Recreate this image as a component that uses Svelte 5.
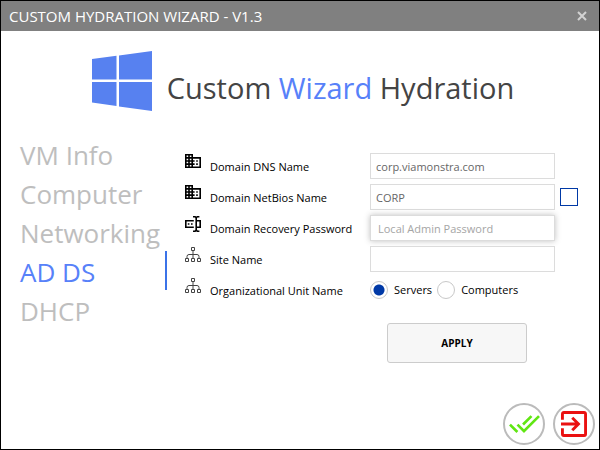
<script>
  const steps = ['VM Info', 'Computer', 'Networking', 'AD DS', 'DHCP'];
  let current = $state('AD DS');
  let dns = $state('corp.viamonstra.com');
  let netbios = $state('CORP');
  let password = $state('');
  let site = $state('');
  let unit = $state('servers');
  let custom = $state(false);
</script>

{#snippet building()}
  <svg class="icon" viewBox="2 3 20 18" width="16" height="14" preserveAspectRatio="none" aria-hidden="true">
    <path d="M18,15H16V17H18M18,11H16V13H18M20,19H12V17H14V15H12V13H14V11H12V9H20M10,7H8V5H10M10,11H8V9H10M10,15H8V13H10M10,19H8V17H10M6,7H4V5H6M6,11H4V9H6M6,15H4V13H6M6,19H4V17H6M12,7V3H2V21H22V7H12Z" />
  </svg>
{/snippet}

{#snippet tree()}
  <svg class="icon tree" viewBox="0 0 16 15" width="16" height="15" aria-hidden="true">
    <path d="M6.5 .5h3v3h-3zM.5 11.5h3v3h-3zM6.5 11.5h3v3h-3zM12.5 11.5h3v3h-3zM8 3.500v8M2 11.500v-2q0-2 2-2h8q2 0 2 2v2" />
  </svg>
{/snippet}

<div class="window">
  <header class="titlebar">
    <span>CUSTOM HYDRATION WIZARD - V1.3</span>
    <button class="close" aria-label="Close">
      <svg viewBox="0 0 10 10" width="10" height="10"><path d="M1 1l8 8M9 1l-8 8" /></svg>
    </button>
  </header>

  <div class="brand">
    <svg viewBox="0 0 60 60" width="60" height="60" aria-hidden="true">
      <path d="M0 8L24.500 4.700V28.500H0zM27 4.400L60 0V28.500H27zM0 31H24.500V55L0 51.500zM27 31H60V60L27 55.400z" />
    </svg>
    <h1>Custom <em>Wizard</em> Hydration</h1>
  </div>

  <main>
    <nav>
      {#each steps as step}
        <button class:active={step === current} onclick={() => (current = step)}>{step}</button>
      {/each}
    </nav>

    <form onsubmit={(e) => e.preventDefault()}>
      <div class="row">
        {@render building()}
        <label for="dns">Domain DNS Name</label>
        <input class="text" id="dns" type="text" bind:value={dns} />
      </div>
      <div class="row">
        {@render building()}
        <label for="netbios">Domain NetBios Name</label>
        <input class="text" id="netbios" type="text" bind:value={netbios} />
        <input class="check" type="checkbox" aria-label="Edit NetBios name" bind:checked={custom} />
      </div>
      <div class="row">
        <svg class="icon" viewBox="2 2 20 20" width="16" height="16" aria-hidden="true">
          <path d="M17,7H22V17H17V19A1,1 0 0,0 18,20H20V22H17.5C16.95,22 16,21.55 16,21C16,21.55 15.05,22 14.5,22H12V20H14A1,1 0 0,0 15,19V5A1,1 0 0,0 14,4H12V2H14.5C15.05,2 16,2.45 16,3C16,2.45 16.95,2 17.5,2H20V4H18A1,1 0 0,0 17,5V7M2,7H13V9H4V15H13V17H2V7M20,15V9H17V15H20M5.500,11H7.500V13H5.500zM9.500,11H11.500V13H9.500z" />
        </svg>
        <label for="password">Domain Recovery Password</label>
        <input class="text raised" id="password" type="password" placeholder="Local Admin Password" bind:value={password} />
      </div>
      <div class="row">
        {@render tree()}
        <label for="site">Site Name</label>
        <input class="text" id="site" type="text" bind:value={site} />
      </div>
      <div class="row" role="radiogroup" aria-labelledby="ou">
        {@render tree()}
        <span class="label" id="ou">Organizational Unit Name</span>
        <div class="options">
          <label><input type="radio" name="unit" value="servers" bind:group={unit} />Servers</label>
          <label><input type="radio" name="unit" value="computers" bind:group={unit} />Computers</label>
        </div>
      </div>
      <button class="apply" type="submit">APPLY</button>
    </form>
  </main>

  <footer>
    <button class="round ok" aria-label="Finish">
      <svg viewBox="0.400 5.500 23.300 13.500" width="31" height="18"><path d="M0.41,13.41L6,19L7.41,17.58L1.83,12M22.24,5.58L11.66,16.17L7.5,12L6.07,13.41L11.66,19L23.66,7M18,7L16.59,5.58L10.24,11.93L11.66,13.34L18,7Z" /></svg>
    </button>
    <button class="round exit" aria-label="Exit">
      <svg viewBox="3 3 18 18" width="26" height="26"><path d="M19,3H5C3.89,3 3,3.89 3,5V9H5V5H19V19H5V15H3V19A2,2 0 0,0 5,21H19A2,2 0 0,0 21,19V5C21,3.89 20.1,3 19,3M10.08,15.58L11.5,17L16.5,12L11.5,7L10.08,8.41L12.67,11H3V13H12.67L10.08,15.58Z" /></svg>
    </button>
  </footer>
</div>

<style>
  :global(body) {
    margin: 0;
    background: #fff;
  }

  .window,
  .window * {
    box-sizing: border-box;
  }

  .window {
    display: flex;
    flex-direction: column;
    min-height: 100vh;
    border: 1px solid #000;
    background: #fff;
    color: #000;
    font-family: 'Open Sans', 'Noto Sans', sans-serif;
    font-size: 11px;
    line-height: 16px;
  }

  button,
  input {
    margin: 0;
    font: inherit;
  }

  button {
    padding: 0;
    border: 0;
    background: none;
    cursor: pointer;
  }

  .titlebar {
    display: flex;
    align-items: center;
    justify-content: space-between;
    height: 30px;
    padding: 0 12px 0 8px;
    background: #808080;
    color: #fff;
    font-size: 15px;
  }

  .close {
    display: flex;
  }

  .close path {
    stroke: #d2d2d2;
    stroke-width: 2;
  }

  .brand {
    display: flex;
    align-items: center;
    justify-content: center;
    gap: 15px;
    padding: 20px 0 0 6px;
  }

  .brand svg {
    fill: #5781f0;
  }

  h1 {
    margin: 14px 0 0;
    color: #444;
    font-size: 29px;
    font-weight: 400;
    line-height: 40px;
    white-space: nowrap;
  }

  h1 em {
    color: #5781f9;
    font-style: normal;
  }

  main {
    display: flex;
    gap: 18px;
    padding: 23px 16px 0 19px;
  }

  nav {
    display: flex;
    flex-direction: column;
    width: 147px;
  }

  nav button {
    border-right: 2px solid transparent;
    color: #bebebe;
    font-size: 26px;
    line-height: 39px;
    text-align: left;
    height: 39px;
    padding-top: 2px;
  }

  nav button.active {
    border-color: #3b73e8;
    color: #5781f9;
  }

  form {
    display: flex;
    flex: 1;
    flex-direction: column;
    gap: 5px;
    padding-top: 19px;
  }

  .row {
    display: flex;
    align-items: center;
    height: 26px;
  }

  .icon {
    align-self: flex-start;
    margin: 1px 9px 0 0;
  }

  .tree {
    fill: none;
    stroke: #444;
  }

  .row > label,
  .label {
    width: 160px;
    padding-top: 2px;
    white-space: nowrap;
  }

  .text {
    width: 185px;
    height: 26px;
    padding: 0 5px;
    border: 1px solid #dcdcdc;
    background: #fff;
    color: #666;
    outline: 0;
  }

  .raised {
    padding: 0 7px;
    box-shadow: 0 0 6px rgba(0, 0, 0, 0.25);
  }

  .raised::placeholder {
    color: #a5a5a5;
    opacity: 1;
  }

  .check {
    width: 18px;
    height: 18px;
    margin-left: 5px;
    border: 1px solid #0039a6;
    appearance: none;
  }

  .check:checked {
    background: #0039a6;
    box-shadow: inset 0 0 0 3px #fff;
  }

  .options {
    display: flex;
    gap: 5px;
  }

  .options label {
    display: flex;
    align-items: center;
    gap: 6px;
  }

  .options input {
    width: 18px;
    height: 18px;
    border: 1px solid #c8c8c8;
    border-radius: 50%;
    background: #fff;
    appearance: none;
  }

  .options input:checked {
    background: radial-gradient(circle, #0039a6 5px, #fff 6px);
  }

  .apply {
    width: 140px;
    height: 40px;
    margin: 15px 0 0 202px;
    border: 1px solid #ccc;
    border-radius: 3px;
    background: #f7f7f7;
    color: #000;
    font-size: 10px;
    font-weight: 700;
  }

  footer {
    display: flex;
    justify-content: flex-end;
    gap: 8px;
    margin-top: auto;
    padding: 8px 4px 4px;
  }

  .round {
    display: flex;
    align-items: center;
    justify-content: center;
    width: 42px;
    height: 42px;
    border: 2px solid #bbb;
    border-radius: 50%;
  }

  .ok {
    fill: #60e613;
  }

  .exit {
    fill: #ea1111;
  }
</style>
